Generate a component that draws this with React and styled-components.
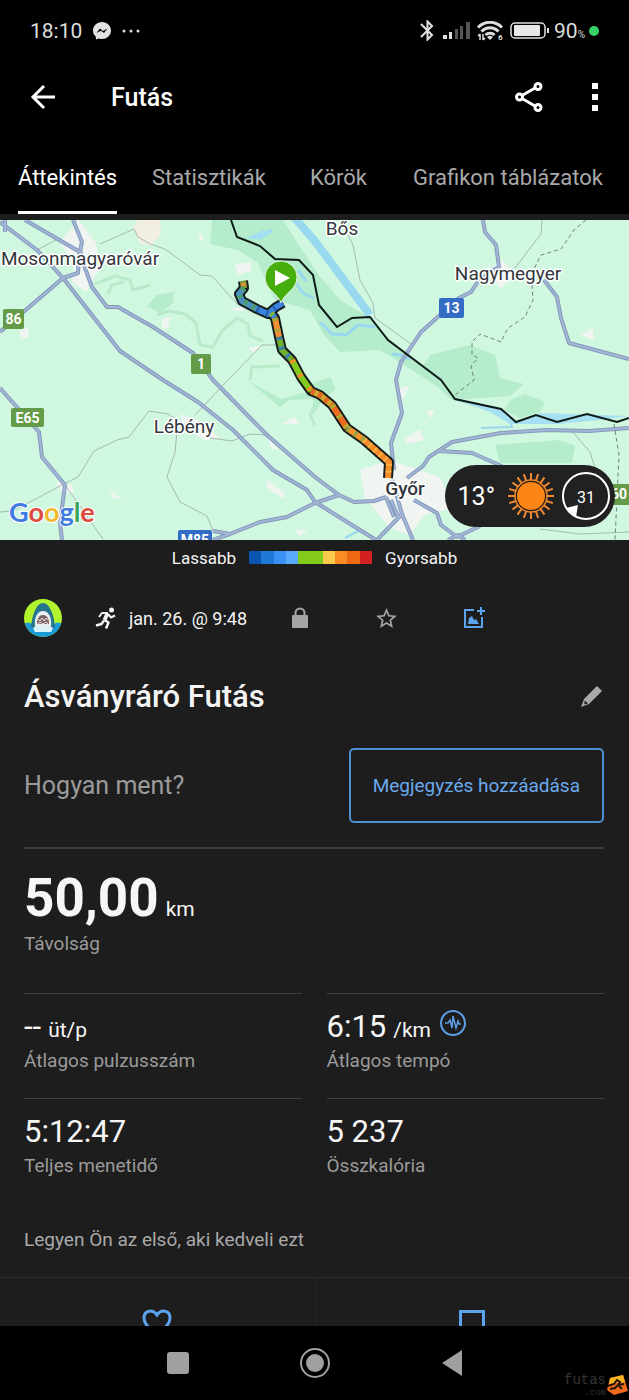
import { useState } from 'react';
import styled, { createGlobalStyle } from 'styled-components';
import { MdBluetooth, MdStarBorder } from 'react-icons/md';

const GlobalStyle = createGlobalStyle`
    * {
        box-sizing: border-box;
    }
    body {
        margin: 0;
        background: #1d1d1d;
        color: #f4f4f4;
        font-family: Roboto, "Liberation Sans", sans-serif;
    }
    svg {
        display: block;
        flex: none;
    }
    h1, h2, p, dl, dd {
        margin: 0;
        font-weight: 400;
    }
    button {
        border: 0;
        padding: 0;
        background: none;
        color: inherit;
        font: inherit;
        cursor: pointer;
    }
`

const Page = styled.div`
    display: flex;
    flex-direction: column;
    min-height: 100vh;
`

const StatusBar = styled.div`
    display: flex;
    align-items: center;
    justify-content: space-between;
    height: 61px;
    padding: 0 30px;
    background: #000;
    color: #dedede;
    font-size: 21px;
`

const StatusGroup = styled.div`
    display: flex;
    align-items: center;
    gap: ${props => props.$gap}px;
`

const Battery = styled.span`
    display: flex;
    align-items: center;
    gap: 4px;

    small {
        font-size: 10px;
    }
`

const TopBar = styled.header`
    display: flex;
    align-items: center;
    height: 72px;
    padding: 0 30px;
    background: #000;
    color: #fff;
`

const Heading = styled.h1`
    flex: 1;
    margin-left: 55px;
    font-size: 25px;
    font-weight: 500;
`

const TopActions = styled.div`
    display: flex;
    align-items: center;
    gap: 48px;
`

const Tabs = styled.nav`
    display: grid;
    grid-template-columns: 134fr 158fr 103fr 192fr;
    justify-items: start;
    padding: 0 24px 0 18px;
    background: #000;
`

const Tab = styled.button`
    padding: 33px 0 21px;
    border-bottom: 3px solid ${props => props.$active ? '#fff' : 'transparent'};
    color: ${props => props.$active ? '#fff' : '#a9a9a9'};
    font-size: 22px;
    line-height: 24px;
    white-space: nowrap;
`

const MapBox = styled.section`
    position: relative;
    height: 320px;
    margin-top: 6px;
    overflow: hidden;
    background: #d0f7df;

    > svg {
        width: 100%;
        height: 100%;
    }
`

const Weather = styled.div`
    position: absolute;
    right: 14px;
    bottom: 13px;
    display: flex;
    align-items: center;
    gap: 12px;
    height: 62px;
    padding: 0 4px 0 13px;
    border-radius: 31px;
    background: #212121;
    color: #fff;
    font-size: 25px;
`

const Legend = styled.div`
    display: flex;
    align-items: center;
    justify-content: center;
    gap: 13px;
    height: 35px;
    font-size: 17px;
`

const Scale = styled.div`
    display: flex;
    width: 123px;
    height: 13px;
`

const ScaleStep = styled.span`
    flex: 1;
    background: ${props => props.$color};
`

const Meta = styled.div`
    display: flex;
    align-items: center;
    height: 86px;
    padding: 0 24px;
`

const Activity = styled.div`
    display: flex;
    align-items: center;
    gap: 12px;
    min-width: 161px;
    margin-left: 33px;
    font-size: 18px;
    white-space: nowrap;
`

const MetaButton = styled.button`
    display: flex;
    justify-content: center;
    width: 87px;
    color: ${props => props.$accent ? '#5ba3ee' : '#a5a5a5'};
`

const TitleRow = styled.div`
    display: flex;
    align-items: center;
    justify-content: space-between;
    height: 70px;
    padding: 0 27px 0 24px;
`

const Title = styled.h2`
    font-size: 31px;
    font-weight: 500;
`

const Content = styled.main`
    padding: 17px 25px 0 24px;
`

const NoteRow = styled.div`
    display: flex;
    align-items: center;
    justify-content: space-between;
    padding-bottom: 24px;
    border-bottom: 2px solid #3d3d3d;
    color: #9b9b9b;
    font-size: 25px;
`

const NoteButton = styled.button`
    height: 75px;
    padding: 0 22px;
    border: 2px solid #4f8fd2;
    border-radius: 5px;
    color: #6aa9ec;
    font-size: 19px;
`

const Metric = styled.dl`
    display: flex;
    flex-direction: column-reverse;
    justify-content: flex-end;
    padding: ${props => props.$main ? '19px 0 37px' : '13px 0 0'};
    gap: ${props => props.$main ? 4 : 2}px;
    ${props => !props.$main && 'height: 105px; border-top: 1px solid #404040;'}

    dt {
        color: #9b9b9b;
        font-size: 19px;
        line-height: 24px;
    }
    dd {
        display: flex;
        align-items: baseline;
        gap: 7px;
        color: #f6f6f6;
        font-size: ${props => props.$main ? 53 : 31}px;
        font-weight: ${props => props.$main ? 700 : 400};
        line-height: ${props => props.$main ? 60 : 40}px;
    }
    svg {
        align-self: flex-start;
    }
`

const Unit = styled.span`
    font-size: 21px;
    font-weight: 400;
    line-height: 24px;
`

const MetricGrid = styled.div`
    display: grid;
    grid-template-columns: 1fr 1fr;
    column-gap: 25px;
`

const Likes = styled.p`
    padding: 25px 0;
    color: #a9a9a9;
    font-size: 19px;
    line-height: 24px;
`

const ActionBar = styled.div`
    display: grid;
    grid-template-columns: 1fr 1fr;
    height: 49px;
    overflow: hidden;
    border-top: 1px solid #2d2d2d;
`

const Action = styled.button`
    display: flex;
    justify-content: center;
    align-items: flex-start;
    padding-top: 31px;
    color: #5ba3ee;

    & + & {
        border-left: 1px solid #272727;
    }
`

const SystemNav = styled.footer`
    position: relative;
    display: flex;
    justify-content: center;
    height: 74px;
    background: #000;
`

const NavButton = styled.button`
    display: flex;
    align-items: center;
    justify-content: center;
    width: 137px;
`

const Watermark = styled.div`
    position: absolute;
    right: 1px;
    bottom: 2px;
    display: flex;
    align-items: center;
    color: #373533;
    font-family: "Liberation Mono", monospace;
    font-size: 14px;
    line-height: 16px;
    text-align: right;

    small {
        display: block;
        font-size: 9px;
        line-height: 10px;
    }
`

const tabs = ['Áttekintés', 'Statisztikák', 'Körök', 'Grafikon táblázatok'];

const scaleColors = ['#0a55b2', '#1d78d6', '#3a91f3', '#5aaafb', '#82cb1c', '#82cb1c', '#fbc94b', '#fb8b24', '#ed6a12', '#d32121'];

const roads = [
    'M0 222 L37 250 L63 278 L120 351 L163 380 L198 402 L233 430 L273 470 L307 490 L315 502 L376 540',
    'M25 220 L80 252 M73 220 L82 242 L79 256 L78 273 L63 278 L0 332 M5 220 L5 232',
    'M80 250 L85 268 L92 287 L107 307 L118 307 L153 327 L193 353 L213 380 L267 435 L315 477 L339 495 L354 502 L374 501 L386 497',
    'M483 220 L485 232 L496 245 L499 267 L490 272 L477 283 L471 292 L459 298 L421 332 L401 362 L396 380 L402 413 L391 443 L394 470',
    'M544 280 L557 297 L561 318 L569 343 L629 359',
    'M0 388 L15 405 L39 432 L42 457 L65 485 L60 523 L62 540',
    'M407 478 L423 466 L429 457 L452 442 L501 433 L547 430 L589 431 L629 428',
    'M439 451 L472 453 L497 464 L520 475 M414 500 L437 513 L441 525 L457 537 L480 526 M448 540 L458 535 L465 540',
    'M213 540 L230 534 L260 522 L287 517 L315 503 L339 495 M213 531 L230 534',
    'M386 497 L394 517 M402 514 L377 540 M392 480 L402 514 L413 540 M391 500 L399 519',
];

const lanes = [
    'M100 244 L134 229 L138 237 L150 244 L165 249 L200 275 L212 276 L238 305 M37 250 L60 238',
    'M280 345 L262 345 L228 380 L195 415',
    'M0 512 L13 511 L60 486 L78 477 L94 451 L117 440 L129 437 L149 411 L168 414 L178 421 L175 452 L167 477 L180 502 L207 516 L213 531',
    'M210 438 L232 441 L250 434 L267 435',
    'M345 229 L353 245 L360 280 L373 303 L375 318 L411 344',
    'M515 268 L541 234 L542 220',
    'M65 485 L103 539 M572 431 L590 452 L597 475 M540 529 L580 534 L629 532',
];

const forests = [
    'M212 220 H283 L315 270 L340 300 L372 319 L390 340 L441 380 L455 399 L420 375 L380 350 L340 352 L324 335 L310 310 L275 300 L258 263 L238 250 L210 244Z',
    'M430 355 L470 345 L495 355 L500 378 L524 384 L510 396 L452 400 L420 371Z',
    'M495 445 L560 440 L575 446 L572 463 L500 463Z',
    'M510 400 L525 394 L545 402 L540 412 L520 418 L504 410Z',
    'M157 295 L174 292 L173 303 L160 313 L147 306Z',
    'M247 380 L281 399 L310 391 L314 399 L289 400 L280 407Z',
    'M313 383 L331 377 L335 390 L325 397 L313 415Z',
];

const builtUp = [
    'M60 242 L79 220 L96 243 L100 268 L86 292 L72 282 L74 265Z',
    'M360 470 L390 460 L440 477 L454 508 L425 515 L410 535 L390 528 L365 498Z',
    'M487 272 L502 260 L515 273 L501 289Z',
    'M180 414 L198 420 L220 438 L205 440 L185 429Z',
    'M235 264 L251 262 L251 271 L238 275Z',
    'M225 310 L248 306 L242 311Z M162 319 L170 317 L168 328 L162 329Z M248 348 L263 345 L254 353Z',
    'M282 424 L294 417 L300 424Z M267 437 L279 449 L272 450Z M267 480 L285 493 L284 499 L267 488Z',
    'M110 490 L123 500 L113 498Z M55 481 L72 485 L74 493 L62 492Z M295 529 L308 530 L300 536Z',
    'M581 335 L593 328 L594 340Z M427 411 L434 410 L431 419Z M395 390 L410 385 L403 399Z',
    'M405 439 L420 429 L424 440 L408 444Z M19 331 L28 327 L29 337 L21 339Z M197 232 L203 236 L202 243Z',
];

const border = 'M231 220 L237 237 L260 246 L275 259 L299 260 L313 275 L319 305 L337 327 L352 318 L370 317 L388 340 L441 380 L455 399 L501 409 L516 422 L536 415 L557 422 L587 414 L617 422 L629 418';

const track = 'M243 281 L244 288 L239 294 L242 301 L257 309 L268 314 L276 307 L283 303 M270 312 L275 318 L279 337 L282 350 L292 360 L301 377 L311 391 L320 395 L332 405 L347 428 L364 440 L381 455 L389 462 L388 478';

// [path, base colour, colour of the short pieces, dash pattern]
const paces = [
    ['M243 281 L244 288', '#e0923a', '#6c9f36', '2 3'],
    ['M244 288 L239 294 L242 301 L257 309', '#4b91bd', '#4c9c66', '3 6'],
    ['M257 309 L268 314 L276 307 L283 303', '#3b84dd', '#235ba9', '2 8'],
    ['M271 313 L275 318', '#3b84dd', '#78b737', '3 3'],
    ['M275 318 L279 337', '#f39035', '#a8a638', '3 8'],
    ['M279 337 L282 350 L292 360', '#6fad31', '#367eab', '3 7'],
    ['M292 360 L301 377 L311 391', '#83ca20', '#f48d26', '3 13'],
    ['M311 391 L320 395 L332 405', '#d1a72f', '#e16725', '4 4'],
    ['M332 405 L347 428', '#ee6b22', '#adae31', '3 9'],
    ['M347 428 L364 440', '#f7932a', '#92a545', '3 6'],
    ['M364 440 L381 455 L389 462 L388 478', '#f58a28', '#f7b442', '2 5'],
];

const places = [
    { name: 'Mosonmagyaróvár', x: 80, y: 265 },
    { name: 'Bős', x: 342, y: 235 },
    { name: 'Nagymegyer', x: 508, y: 280 },
    { name: 'Lébény', x: 184, y: 433 },
    { name: 'Győr', x: 405, y: 495, bold: true },
];

const signs = [
    { text: '86', x: 3, y: 309, w: 21, h: 20, color: '#639b48' },
    { text: '1', x: 191, y: 354, w: 20, h: 20, color: '#639b48' },
    { text: 'E65', x: 11, y: 408, w: 33, h: 19, color: '#639b48' },
    { text: '13', x: 439, y: 298, w: 25, h: 20, color: '#336cc4' },
    { text: 'M85', x: 178, y: 530, w: 34, h: 22, color: '#336cc4' },
    { text: '60', x: 606, y: 484, w: 26, h: 21, color: '#639b48' },
];

const RouteMap = () => (
    <svg viewBox="0 220 629 320" preserveAspectRatio="xMidYMid slice" fontFamily="Roboto, sans-serif">
        <rect x="0" y="220" width="629" height="320" fill="#d0f7df" />
        <path d="M137 220 H160 L161 234 L151 246 L140 243 L133 229Z" fill="#f2eee0" />
        {forests.map(d => <path key={d} d={d} fill="#b5eccb" />)}
        <g fill="none" stroke="#b9eaca" strokeWidth="3" strokeLinejoin="round">
            <path d="M95 284 L115 276 L130 280 L133 290 L150 285 M108 294 L112 285 L124 282" />
            <path d="M157 315 L168 311 L185 314 L196 323 L200 345 L213 347 L222 331 L237 318 L248 324 L250 336 L263 341" />
            <path d="M250 380 L252 367 L280 366 M315 405 L310 415 L315 425" />
        </g>
        {builtUp.map(d => <path key={d} d={d} fill="#f0f5f2" />)}
        <g fill="none" stroke="#98d9f0">
            <path d="M293 216 L314 240 L370 315" strokeWidth="8" />
            <path d="M320 322 L332 334 L346 335 L358 325 L375 327 M392 354 L400 355 L410 359" strokeWidth="3" />
            <path d="M257 237 L272 230 L260 238Z M296 283 L303 293 L314 298 M298 270 L306 281" strokeWidth="3" />
            <path d="M455 399 L490 410 L510 421 L512 427 L481 428" strokeWidth="2" />
            <path d="M345 538 L358 531" strokeWidth="2" />
        </g>
        <path d="M455 399 L501 408 L516 421 L540 413 L629 416 L600 420 L557 424 L510 424 L490 412Z" fill="#a7e0f2" />
        <path d="M245 239 L263 230 L272 232 L260 239Z" fill="#a2dff2" />
        <g fill="none" stroke="#a5bab4" strokeWidth="1">
            {lanes.map(d => <path key={d} d={d} />)}
        </g>
        <g fill="none" stroke="#8298bd" strokeWidth="4" strokeLinejoin="round">
            {roads.map(d => <path key={d} d={d} />)}
        </g>
        <g fill="none" stroke="#a4b6d5" strokeWidth="2" strokeLinejoin="round">
            {roads.map(d => <path key={d} d={d} />)}
        </g>
        <path
            d="M586 220 L574 230 L561 249 L541 255 L535 267 L532 285 L533 300 L525 317 L508 328 L501 342 L480 334 L472 342 L472 355 L478 358 L471 366 L474 380 L455 395 M614 424 L619 455 L615 540"
            fill="none"
            stroke="#71827c"
            strokeDasharray="4 3"
        />
        <path d={border} fill="none" stroke="#0e1c19" strokeWidth="2" />

        {signs.map(sign => (
            <g key={sign.text}>
                <rect x={sign.x} y={sign.y} width={sign.w} height={sign.h} rx="2" fill={sign.color} />
                <text x={sign.x + sign.w / 2} y={sign.y + 15} textAnchor="middle" fill="#fff" fontSize="14" fontWeight="700">{sign.text}</text>
            </g>
        ))}

        <path d={track} fill="none" stroke="#141c1c" strokeWidth="10" strokeLinejoin="round" />
        {paces.map(([d, base, piece, dash]) => (
            <g key={d} fill="none" strokeWidth="6" strokeLinejoin="round">
                <path d={d} stroke={base} />
                <path d={d} stroke={piece} strokeDasharray={dash} />
            </g>
        ))}
        <path d="M281 303 C278 293 265 290 265 277 A16 16 0 0 1 297 277 C297 290 284 293 281 303Z" fill="#45ad0c" stroke="#dff3df" strokeWidth="1" />
        <path d="M275 270 L290 278 L275 286Z" fill="#fff" />

        {places.map(place => (
            <text
                key={place.name}
                x={place.x}
                y={place.y}
                textAnchor="middle"
                fill="#33363c"
                stroke="#fff"
                strokeWidth="3"
                strokeLinejoin="round"
                paintOrder="stroke"
                fontSize="19"
                fontWeight={place.bold ? 500 : 400}
            >
                {place.name}
            </text>
        ))}

        <text x="9" y="522" fontSize="27" fontFamily="Lato, sans-serif" fontWeight="700" stroke="#fff" strokeWidth="2" paintOrder="stroke">
            <tspan fill="#3f7be0">G</tspan>
            <tspan fill="#df4a3e">o</tspan>
            <tspan fill="#f0b92a">o</tspan>
            <tspan fill="#3f7be0">g</tspan>
            <tspan fill="#3ba55a">l</tspan>
            <tspan fill="#df4a3e">e</tspan>
        </text>
    </svg>
)

const rays = Array.from({ length: 20 }, (_, i) => i * 18);

const Sun = () => (
    <svg width="48" height="48" viewBox="-24 -24 48 48">
        <g stroke="#ee8a32" strokeWidth="2">
            {rays.map(angle => <path key={angle} d="M0 -16 V-23" transform={`rotate(${angle})`} />)}
        </g>
        <circle r="16" fill="#241c14" stroke="#ee8a32" strokeWidth="1.5" />
        <circle r="14" fill="#fd8516" />
    </svg>
)

const Wind = () => (
    <svg width="50" height="50" viewBox="-25 -25 50 50">
        <circle r="23" fill="none" stroke="#fff" strokeWidth="2" />
        <path d="M-20 12 L-8 9 L-10 21Z" fill="#fff" />
        <text y="7" textAnchor="middle" fill="#fff" fontSize="16" fontFamily="Roboto, sans-serif">31</text>
    </svg>
)

const Messenger = () => (
    <svg width="18" height="18" viewBox="0 0 18 18">
        <path d="M9 0 C4 0 0 3.700 0 8.500 C0 11 1 13 2.800 14.500 L3 17.500 L5.700 16.500 C12 18.500 18 14.500 18 8.500 C18 3.700 14 0 9 0Z" fill="#e2e2e2" />
        <path d="M3.500 11 L7 6.500 L10 9 L14.500 6.500 L11 11 L8 8.700Z" fill="#000" />
    </svg>
)

const Signal = () => (
    <svg width="27" height="17" viewBox="0 0 27 17">
        <rect x="0" y="13" width="4" height="4" fill="#dedede" />
        <rect x="6" y="10" width="3" height="7" fill="#dedede" />
        <rect x="12" y="7" width="3" height="10" fill="#555" />
        <rect x="17" y="4" width="3" height="13" fill="#555" />
        <rect x="23" y="0" width="4" height="17" fill="#555" />
    </svg>
)

const Wifi = () => (
    <svg width="26" height="20" viewBox="0 0 26 20">
        <g fill="none" stroke="#dedede" strokeWidth="3">
            <path d="M1 6.500 C8 -0.500 18 -0.500 25 6.500" />
            <path d="M4.500 10.500 C9.500 5.500 16.500 5.500 21.500 10.500" />
            <path d="M8.500 14 C11 11.500 15 11.500 17.500 14" />
        </g>
        <path d="M10 16 Q13 13.500 16 16 L13 19Z" fill="#dedede" />
        <path d="M3 19 V13 M1 15 L3 13 M6 13 V19 M8 17 L6 19" stroke="#dedede" strokeWidth="1.500" />
        <text x="21" y="19" fill="#dedede" fontSize="8" fontWeight="700" fontFamily="Roboto, sans-serif">6</text>
    </svg>
)

const BatteryIcon = () => (
    <svg width="40" height="17" viewBox="0 0 40 17">
        <rect x="1" y="1" width="34" height="15" rx="4" fill="none" stroke="#dedede" strokeWidth="1.500" />
        <rect x="4" y="3" width="26" height="11" rx="1" fill="#e8e8e8" />
        <path d="M38 6 V11" stroke="#dedede" strokeWidth="2" />
    </svg>
)

const Avatar = () => (
    <svg width="38" height="38" viewBox="0 0 38 38">
        <clipPath id="avatar"><circle cx="19" cy="19" r="19" /></clipPath>
        <g clipPath="url(#avatar)">
            <rect width="38" height="38" fill="#b2f42d" />
            <path d="M0 25 Q4 22 8 25 Q13 28 19 24 Q25 28 30 25 Q34 22 38 25 V38 H0Z" fill="#1b9bd8" />
            <path d="M7 28 C8 17 12 4 19 4 C26 4 30 17 31 28 L27 31 H11Z" fill="#25768d" />
            <path d="M11 27 C10 19 13 12 19 12 C25 12 28 19 27 27 L24 31 H14Z" fill="#e9eeee" />
            <path d="M13 25 C13 18 16 16 19 16 C22 16 25 18 25 25Z" fill="#7a6466" />
            <path d="M14 20 L16 22 L18 19 L20 22 L22 19 L24 21 M14 25 L16 23 L19 25 L22 23 L24 25" fill="none" stroke="#f0e2e0" />
            <path d="M9 29 Q14 24 19 29 Q24 24 29 29 L27 33 H11Z" fill="#d9f1f8" />
        </g>
    </svg>
)

const Runner = () => (
    <svg width="22" height="22" viewBox="0 0 22 22" fill="none" stroke="#f4f4f4" strokeWidth="2" strokeLinejoin="round">
        <circle cx="16.500" cy="3" r="2.500" fill="#f4f4f4" stroke="none" />
        <path d="M12.500 6.500 L9.500 13" strokeWidth="4" />
        <path d="M13 7 L16 10.500 L20 8.500" />
        <path d="M13 6 L7 6 L4 10" />
        <path d="M9.500 13 L13.500 15.500 L11 21.500" strokeWidth="2.500" />
        <path d="M9 13.500 L6.500 17 L1 18.500" strokeWidth="2.500" />
    </svg>
)

const Lock = () => (
    <svg width="18" height="22" viewBox="0 0 18 22">
        <path d="M4.500 9 V6 A4.500 4.500 0 0 1 13.500 6 V9" fill="none" stroke="currentColor" strokeWidth="2" />
        <rect x="1" y="8" width="16" height="13" rx="1" fill="currentColor" />
    </svg>
)

const PhotoAdd = () => (
    <svg width="22" height="22" viewBox="0 0 22 22" fill="none" stroke="currentColor" strokeWidth="2">
        <path d="M11 3 H2 V20 H19 V10" />
        <path d="M14 4 H22 M18 0 V8" />
        <path d="M5 17 L6 11 L9 9 L11 13 L13 12 L16 17Z" fill="currentColor" stroke="none" />
    </svg>
)

const App = () => {
    const [tab, setTab] = useState(tabs[0]);

    return (
        <Page>
            <GlobalStyle />
            <StatusBar>
                <StatusGroup $gap={11}>
                    <span>18:10</span>
                    <Messenger />
                    <svg width="18" height="4" viewBox="0 0 18 4" fill="#dedede">
                        <circle cx="2" cy="2" r="1.500" />
                        <circle cx="9" cy="2" r="1.500" />
                        <circle cx="16" cy="2" r="1.500" />
                    </svg>
                </StatusGroup>
                <StatusGroup $gap={7}>
                    <StatusGroup $gap={3}>
                        <MdBluetooth size={25} />
                        <Signal />
                    </StatusGroup>
                    <Wifi />
                    <Battery>
                        <BatteryIcon />
                        <span>90<small>%</small></span>
                        <svg width="10" height="10" viewBox="0 0 10 10"><circle cx="5" cy="5" r="5" fill="#35d167" /></svg>
                    </Battery>
                </StatusGroup>
            </StatusBar>

            <TopBar>
                <button type="button" aria-label="Vissza">
                    <svg width="26" height="26" viewBox="0 0 26 26" fill="none" stroke="#fff" strokeWidth="3">
                        <path d="M25 13 H3 M14 2 L3 13 L14 24" />
                    </svg>
                </button>
                <Heading>Futás</Heading>
                <TopActions>
                    <button type="button" aria-label="Megosztás">
                        <svg width="28" height="30" viewBox="0 0 28 30" fill="none" stroke="#fff" strokeWidth="3">
                            <path d="M7 13.500 L20 6 M7 16.500 L20 24" />
                            <circle cx="4.500" cy="15" r="3" />
                            <circle cx="23" cy="4.500" r="3" />
                            <circle cx="23" cy="25.500" r="3" />
                        </svg>
                    </button>
                    <button type="button" aria-label="Továbbiak">
                        <svg width="8" height="28" viewBox="0 0 8 28" fill="#fff">
                            <path d="M1 0 H7 V6 H1Z M1 11 H7 V17 H1Z M1 22 H7 V28 H1Z" />
                        </svg>
                    </button>
                </TopActions>
            </TopBar>

            <Tabs>
                {tabs.map(name => (
                    <Tab key={name} type="button" $active={name === tab} onClick={() => setTab(name)}>{name}</Tab>
                ))}
            </Tabs>

            <MapBox>
                <RouteMap />
                <Weather>
                    <span>13°</span>
                    <StatusGroup $gap={6}>
                        <Sun />
                        <Wind />
                    </StatusGroup>
                </Weather>
            </MapBox>

            <Legend>
                <span>Lassabb</span>
                <Scale>
                    {scaleColors.map((color, i) => <ScaleStep key={i} $color={color} />)}
                </Scale>
                <span>Gyorsabb</span>
            </Legend>

            <Meta>
                <Avatar />
                <Activity>
                    <Runner />
                    <span>jan. 26. @ 9:48</span>
                </Activity>
                <MetaButton type="button" aria-label="Adatvédelem"><Lock /></MetaButton>
                <MetaButton type="button" aria-label="Kedvenc"><MdStarBorder size={25} /></MetaButton>
                <MetaButton type="button" aria-label="Fénykép hozzáadása" $accent><PhotoAdd /></MetaButton>
            </Meta>

            <TitleRow>
                <Title>Ásványráró Futás</Title>
                <button type="button" aria-label="Szerkesztés">
                    <svg width="21" height="21" viewBox="0 0 21 21" fill="#a9a9a9">
                        <path d="M16 0 L21 5 L8 18 L0 21 L3 13Z" />
                        <path d="M3.500 14.500 L7 17.500 L3.500 18.500Z" fill="#1d1d1d" />
                    </svg>
                </button>
            </TitleRow>

            <Content>
                <NoteRow>
                    <p>Hogyan ment?</p>
                    <NoteButton type="button">Megjegyzés hozzáadása</NoteButton>
                </NoteRow>

                <Metric $main>
                    <dt>Távolság</dt>
                    <dd>50,00<Unit>km</Unit></dd>
                </Metric>

                <MetricGrid>
                    <Metric>
                        <dt>Átlagos pulzusszám</dt>
                        <dd>--<Unit>üt/p</Unit></dd>
                    </Metric>
                    <Metric>
                        <dt>Átlagos tempó</dt>
                        <dd>
                            6:15<Unit>/km</Unit>
                            <svg width="30" height="30" viewBox="0 0 30 30" fill="none" stroke="#5c9fe6" strokeWidth="2">
                                <circle cx="15" cy="16" r="12" />
                                <path d="M7 16 H10 L12 13 L14 21 L15 9 L18 21 L20 14 L21 17 H23" strokeWidth="1.500" />
                            </svg>
                        </dd>
                    </Metric>
                    <Metric>
                        <dt>Teljes menetidő</dt>
                        <dd>5:12:47</dd>
                    </Metric>
                    <Metric>
                        <dt>Összkalória</dt>
                        <dd>5 237</dd>
                    </Metric>
                </MetricGrid>

                <Likes>Legyen Ön az első, aki kedveli ezt</Likes>
            </Content>

            <ActionBar>
                <Action type="button" aria-label="Kedvelés">
                    <svg width="30" height="28" viewBox="0 0 30 28" fill="none" stroke="currentColor" strokeWidth="3">
                        <path d="M15 6 C11 0 2 1 2 9 C2 16 9 20 15 26 C21 20 28 16 28 9 C28 1 19 0 15 6Z" />
                    </svg>
                </Action>
                <Action type="button" aria-label="Hozzászólás">
                    <svg width="26" height="28" viewBox="0 0 26 28" fill="none" stroke="currentColor" strokeWidth="3">
                        <path d="M1.500 2.500 H24.500 V19 H9 L1.500 26Z" />
                    </svg>
                </Action>
            </ActionBar>

            <SystemNav>
                <NavButton type="button" aria-label="Legutóbbiak">
                    <svg width="22" height="22" viewBox="0 0 22 22"><rect width="22" height="22" rx="3" fill="#a0a0a0" /></svg>
                </NavButton>
                <NavButton type="button" aria-label="Kezdőlap">
                    <svg width="30" height="30" viewBox="0 0 30 30">
                        <circle cx="15" cy="15" r="14" fill="none" stroke="#a0a0a0" strokeWidth="2" />
                        <circle cx="15" cy="15" r="9" fill="#a0a0a0" />
                    </svg>
                </NavButton>
                <NavButton type="button" aria-label="Vissza">
                    <svg width="20" height="26" viewBox="0 0 20 26"><path d="M20 0 V26 L0 13Z" fill="#a0a0a0" /></svg>
                </NavButton>
                <Watermark>
                    <span>futas<small>.com</small></span>
                    <svg width="22" height="22" viewBox="0 0 22 22">
                        <path d="M4 4 L17 1 L22 17 L8 21 L1 16Z" fill="#f26a1b" />
                        <path d="M4 4 L17 1 L19 8 L3 10Z" fill="#f9b51e" />
                        <path d="M2 12 L8 10 L11 6 L14 8 L12 11 L18 10 M12 11 L9 14 L4 15 M13 12 L16 15" fill="none" stroke="#241206" strokeWidth="2" />
                    </svg>
                </Watermark>
            </SystemNav>
        </Page>
    )
}

export default App;
